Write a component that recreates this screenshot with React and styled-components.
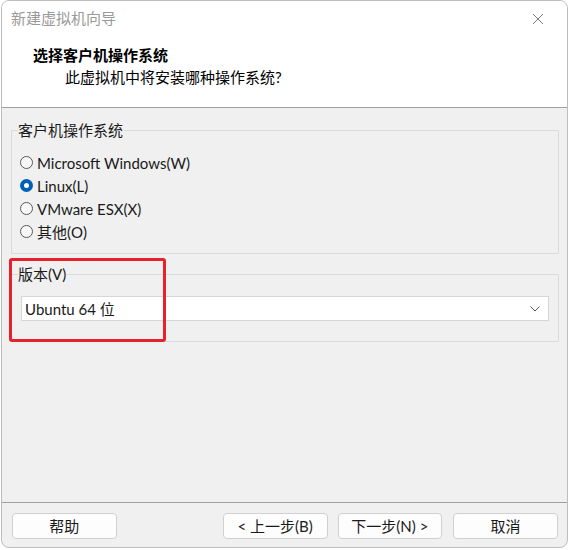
import styled, { createGlobalStyle } from 'styled-components';

const Global = createGlobalStyle`
    body {
        margin: 0;
        background: #fff;
        font-family: Lato, "Noto Sans CJK SC", sans-serif;
        font-size: 15px;
        color: #1a1a1a;
    }
`;

const Window = styled.div`
    width: 567px;
    height: 548px;
    margin-left: 1px;
    box-sizing: border-box;
    border: 1px solid #bdbdbd;
    border-radius: 8px;
    overflow: hidden;
    display: flex;
    flex-direction: column;
    background: #f0f0f0;
`;

const Header = styled.div`
    background: #fff;
    height: 107px;
    box-sizing: border-box;
    border-bottom: 1px solid #a0a0a0;
`;

const TitleBar = styled.div`
    height: 34px;
    display: flex;
    align-items: center;
    justify-content: space-between;
    padding: 0 22px 0 9px;
`;

const Title = styled.span`
    color: #9a9a9a;
    font-size: 15px;
    line-height: 20px;
`;

const CloseButton = styled.div`
    width: 14px;
    height: 14px;
    margin-top: 2px;
    color: #7a7a7a;
    display: flex;
`;

const Heading = styled.div`
    margin: 10px 0 0 31px;
    font-weight: bold;
    line-height: 20px;
    color: #000;
`;

const SubHeading = styled.div`
    margin: 2px 0 0 63px;
    line-height: 20px;
    color: #000;
`;

const Content = styled.div`
    position: relative;
    flex: 1;
    padding: 12px 8px 0 9px;
`;

const Group = styled.fieldset`
    margin: 0 0 10px 0;
    padding: 0 9px ${p => p.$bottom}px 9px;
    border: 1px solid #dadada;
    border-radius: 1px;
    min-width: 0;
`;

const Legend = styled.legend`
    padding: 0 1px 0 0;
    margin-left: -3px;
    line-height: 20px;
`;

const RadioList = styled.div`
    margin-top: 11px;
    display: flex;
    flex-direction: column;
`;

const RadioRow = styled.label`
    display: flex;
    align-items: center;
    height: 23px;
    line-height: 20px;
`;

const RadioDot = styled.span`
    width: 13px;
    height: 13px;
    box-sizing: border-box;
    border-radius: 50%;
    margin: 0 4px 0 -1px;
    flex-shrink: 0;
    border: ${p => (p.$checked ? '4px solid #005fb8' : '1px solid #5a5a5a')};
    background: ${p => (p.$checked ? '#fff' : '#f7f7f7')};
`;

const Select = styled.div`
    margin-top: 12px;
    height: 25px;
    box-sizing: border-box;
    background: #fff;
    border: 1px solid #d6d6d6;
    display: flex;
    align-items: center;
    justify-content: space-between;
    padding: 0 8px 0 3px;
`;

const Chevron = styled.svg`
    width: 10px;
    height: 6px;
`;

const Highlight = styled.div`
    position: absolute;
    left: 7px;
    top: 150px;
    width: 157px;
    height: 84px;
    box-sizing: border-box;
    border: 3px solid #e8212d;
    border-radius: 3px;
    pointer-events: none;
`;

const Footer = styled.div`
    border-top: 1px solid #a0a0a0;
    padding: 10px 9px 8px 10px;
    display: flex;
    align-items: center;
`;

const Button = styled.button`
    width: 105px;
    height: 26px;
    box-sizing: border-box;
    margin-left: ${p => p.$gap}px;
    background: #fdfdfd;
    border: 1px solid #d0d0d0;
    border-radius: 4px;
    font-family: inherit;
    font-size: 15px;
    color: #1a1a1a;
    padding: 0;
    line-height: 20px;
`;

const options = [
    { label: 'Microsoft Windows(W)', checked: false },
    { label: 'Linux(L)', checked: true },
    { label: 'VMware ESX(X)', checked: false },
    { label: '其他(O)', checked: false },
];

export default function App() {
    return (
        <>
            <Global />
            <Window>
                <Header>
                    <TitleBar>
                        <Title>新建虚拟机向导</Title>
                        <CloseButton>
                            <svg width="14" height="14" viewBox="0 0 14 14">
                                <path d="M2 2 L12 12 M12 2 L2 12" stroke="currentColor" strokeWidth="1" fill="none" />
                            </svg>
                        </CloseButton>
                    </TitleBar>
                    <Heading>选择客户机操作系统</Heading>
                    <SubHeading>此虚拟机中将安装哪种操作系统?</SubHeading>
                </Header>

                <Content>
                    <Group $bottom={10}>
                        <Legend>客户机操作系统</Legend>
                        <RadioList>
                            {options.map(o => (
                                <RadioRow key={o.label}>
                                    <RadioDot $checked={o.checked} />
                                    {o.label}
                                </RadioRow>
                            ))}
                        </RadioList>
                    </Group>
                    <Group $bottom={20}>
                        <Legend>版本(V)</Legend>
                        <Select>
                            <span>Ubuntu 64 位</span>
                            <Chevron viewBox="0 0 10 6">
                                <path d="M0.5 0.5 L5 5 L9.5 0.5" stroke="#555" strokeWidth="1" fill="none" />
                            </Chevron>
                        </Select>
                    </Group>
                    <Highlight />
                </Content>

                <Footer>
                    <Button $gap={0}>帮助</Button>
                    <Button $gap={106}>&lt; 上一步(B)</Button>
                    <Button $gap={10}>下一步(N) &gt;</Button>
                    <Button $gap={11}>取消</Button>
                </Footer>
            </Window>
        </>
    );
}
